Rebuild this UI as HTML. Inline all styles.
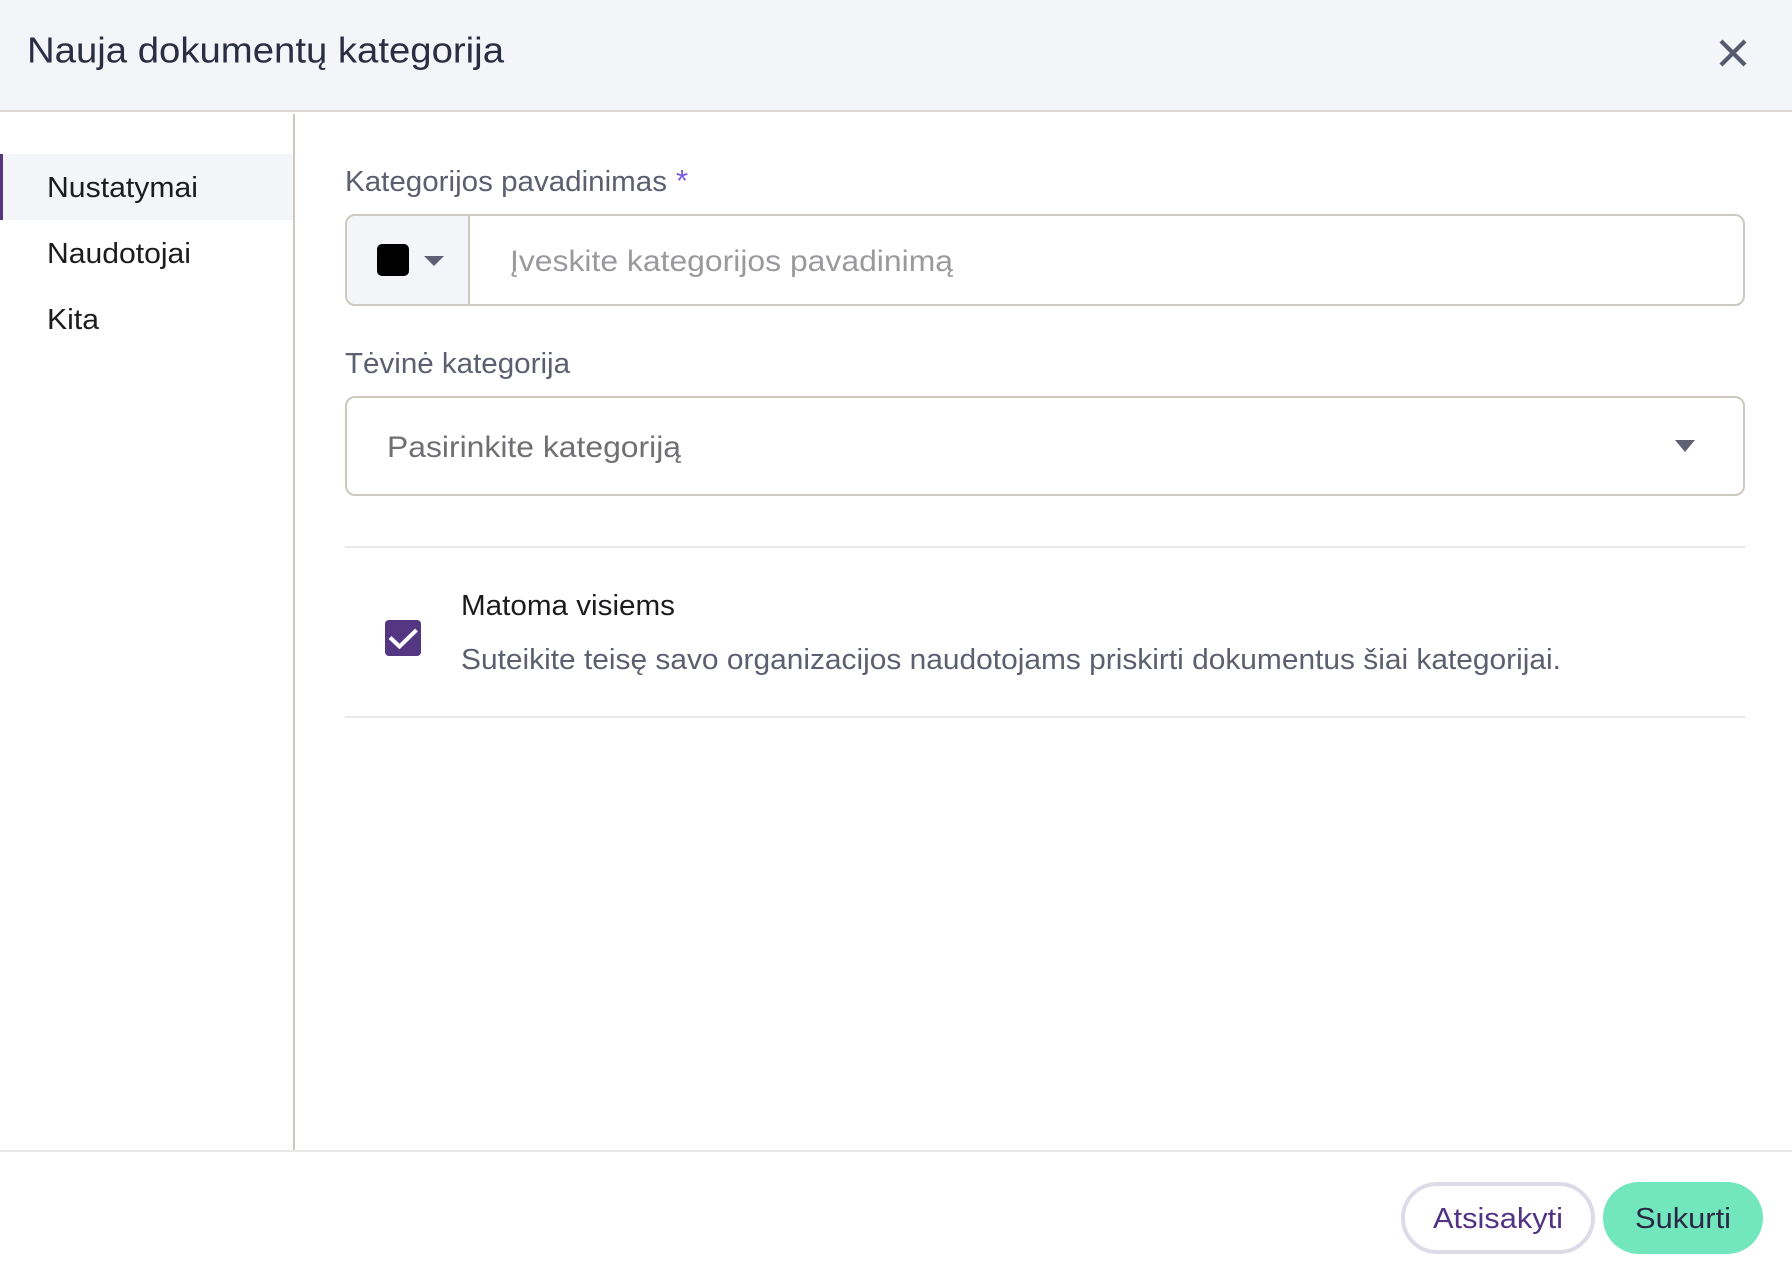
<!DOCTYPE html>
<html lang="lt">
<head>
<meta charset="utf-8">
<title>Nauja dokumentų kategorija</title>
<style>
html,body{margin:0;padding:0;background:#fff;}
body{position:relative;width:1792px;height:1280px;overflow:hidden;font-family:"Liberation Sans",sans-serif;}
.b{position:absolute;box-sizing:border-box;}
svg.t{position:absolute;left:0;top:0;}
svg.t text{font-family:"Liberation Sans",sans-serif;font-size:29px;}
</style>
</head>
<body>
<!-- header -->
<div class="b" style="left:0;top:0;width:1792px;height:110px;background:#f3f5f9;"></div>
<div class="b" style="left:0;top:110px;width:1792px;height:2px;background:#dcd9d4;"></div>
<!-- sidebar -->
<div class="b" style="left:293px;top:114px;width:2px;height:1036px;background:#cdc9c0;"></div>
<div class="b" style="left:0;top:154px;width:293px;height:66px;background:#f3f5f9;"></div>
<div class="b" style="left:0;top:154px;width:3px;height:66px;background:#55377f;"></div>
<!-- input -->
<div class="b" style="left:345px;top:214px;width:1400px;height:92px;border:2px solid #cdc9bf;border-radius:10px;background:#fff;"></div>
<div class="b" style="left:347px;top:216px;width:121px;height:88px;background:#f3f5f9;border-radius:8px 0 0 8px;"></div>
<div class="b" style="left:468px;top:216px;width:2px;height:88px;background:#cdc9bf;"></div>
<div class="b" style="left:377px;top:244px;width:32px;height:32px;background:#000;border-radius:5px;"></div>
<!-- select -->
<div class="b" style="left:345px;top:396px;width:1400px;height:100px;border:2px solid #cdc9bf;border-radius:10px;background:#fff;"></div>
<!-- dividers -->
<div class="b" style="left:345px;top:546px;width:1400px;height:2px;background:#e9e9e9;"></div>
<div class="b" style="left:345px;top:716px;width:1400px;height:2px;background:#e9e9e9;"></div>
<!-- checkbox -->
<div class="b" style="left:385px;top:620px;width:36px;height:36px;background:#553682;border-radius:4px;"></div>
<!-- footer -->
<div class="b" style="left:0;top:1150px;width:1792px;height:2px;background:#e8e6e6;"></div>
<div class="b" style="left:1401px;top:1182px;width:194px;height:72px;border:4px solid #dedbe8;border-radius:36px;background:#fff;"></div>
<div class="b" style="left:1603px;top:1182px;width:160px;height:72px;border-radius:36px;background:#72e6bd;"></div>

<svg class="t" width="1792" height="1280" viewBox="0 0 1792 1280" xmlns="http://www.w3.org/2000/svg">
  <!-- close -->
  <path d="M1721 41L1745 65M1745 41L1721 65" fill="none" stroke="#565a6e" stroke-width="4.2"/>
  <!-- carets -->
  <path d="M424 256H444L434 266Z" fill="#5f6073"/>
  <path d="M1675 440H1695L1685 452Z" fill="#5f6073"/>
  <!-- check -->
  <path d="M390 637.5L399.5 646.5L416.5 630" fill="none" stroke="#fff" stroke-width="4"/>

  <text x="27" y="62.5" style="font-size:36px" fill="#2b2d42" textLength="477" lengthAdjust="spacingAndGlyphs">Nauja dokumentų kategorija</text>

  <text x="47" y="197" fill="#1c1c1f" textLength="151" lengthAdjust="spacingAndGlyphs">Nustatymai</text>
  <text x="47" y="263" fill="#1c1c1f" textLength="144" lengthAdjust="spacingAndGlyphs">Naudotojai</text>
  <text x="47" y="329" fill="#1c1c1f" textLength="52" lengthAdjust="spacingAndGlyphs">Kita</text>

  <text x="345" y="191" fill="#5c5f70" textLength="322" lengthAdjust="spacingAndGlyphs">Kategorijos pavadinimas</text>
  <text x="676" y="191" fill="#7a5be0" style="font-size:31px">*</text>

  <text x="510" y="271" style="font-size:30px" fill="#9a9a9e" textLength="443" lengthAdjust="spacingAndGlyphs">Įveskite kategorijos pavadinimą</text>

  <text x="345" y="373" fill="#5c5f70" textLength="225" lengthAdjust="spacingAndGlyphs">Tėvinė kategorija</text>

  <text x="387" y="457" style="font-size:30px" fill="#6f6f74" textLength="294" lengthAdjust="spacingAndGlyphs">Pasirinkite kategoriją</text>

  <text x="461" y="615" fill="#1c1c1f" textLength="214" lengthAdjust="spacingAndGlyphs">Matoma visiems</text>
  <text x="461" y="669" fill="#5c5f70" textLength="1100" lengthAdjust="spacingAndGlyphs">Suteikite teisę savo organizacijos naudotojams priskirti dokumentus šiai kategorijai.</text>

  <text x="1433" y="1228" fill="#513284" textLength="130" lengthAdjust="spacingAndGlyphs">Atsisakyti</text>
  <text x="1635" y="1228" fill="#2a2845" textLength="96" lengthAdjust="spacingAndGlyphs">Sukurti</text>
</svg>
</body>
</html>
